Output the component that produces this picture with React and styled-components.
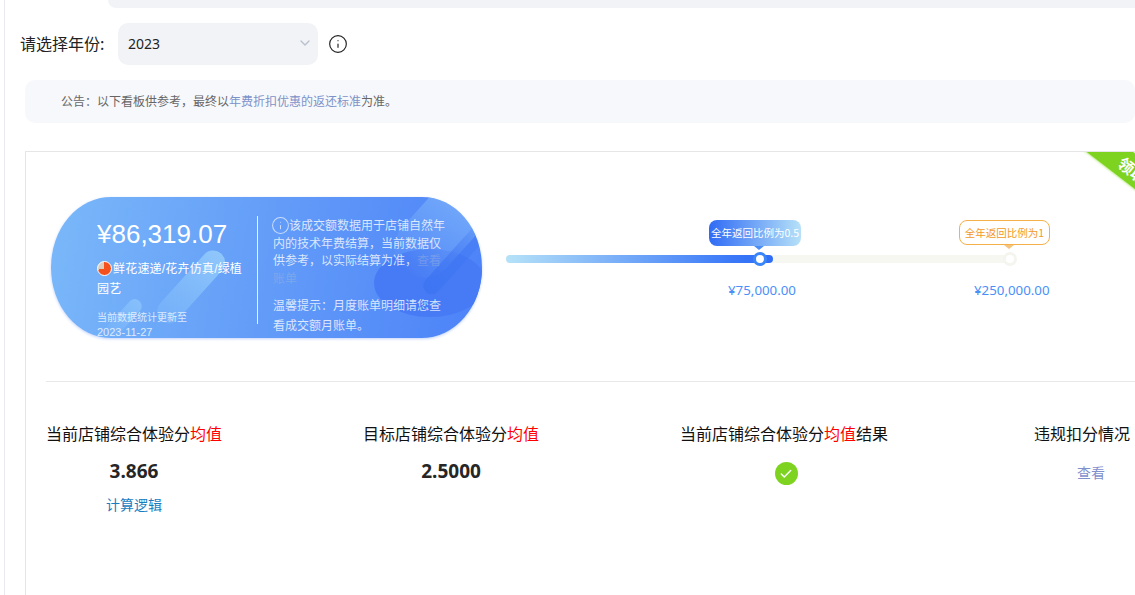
import React from "react";
import styled, { createGlobalStyle } from "styled-components";
import { Info, ChevronDown, Check } from "lucide-react";

const COLON = "\uFF1A";
const COMMA = "\uFF0C";
const STOP = "\u3002";

const GlobalStyle = createGlobalStyle`
  html, body { margin: 0; padding: 0; background: #fff; overflow: hidden; }
  body { font-family: "Noto Sans", "Noto Sans CJK SC", sans-serif; }
`;

const Page = styled.div`
  box-sizing: border-box;
  width: 1131px;
  height: 595px;
  margin-left: 4px;
  border-left: 1px solid #e9e9ef;
  overflow: hidden;
`;
const TopBar = styled.div`
  height: 8px;
  margin-left: 103px;
  background: #f2f3f7;
  border-bottom-left-radius: 10px;
`;
const YearRow = styled.div`
  display: flex;
  align-items: center;
  margin: 15px 0 15px 15px;
`;
const YearLabel = styled.span`
  width: 98px;
  padding-bottom: 3px;
  font-size: 16px;
  color: #222;
  font-family: "Noto Sans CJK SC", sans-serif;
`;
const YearSelect = styled.div`
  box-sizing: border-box;
  display: flex;
  align-items: center;
  justify-content: space-between;
  width: 200px;
  height: 42px;
  padding: 0 5px 2px 10px;
  background: #f2f3f7;
  border-radius: 10px;
  font-size: 14px;
  color: #222;
`;
const YearInfo = styled.span`
  display: flex;
  margin-left: 10px;
  color: #222;
`;
const Notice = styled.div`
  height: 43px;
  margin-left: 20px;
  padding-left: 36px;
  background: #f7f8fb;
  border-radius: 10px;
  font-size: 12px;
  line-height: 42px;
  color: #666;
  font-family: "Noto Sans CJK SC", sans-serif;
`;
const NoticeLink = styled.span`
  color: #7d92c9;
`;
const Card = styled.section`
  position: relative;
  box-sizing: border-box;
  height: 500px;
  margin: 28px 0 0 20px;
  padding: 45px 0 0 20px;
  border: 1px solid #e6e6e6;
  border-right: 0;
  overflow: hidden;
`;
const Ribbon = styled.div`
  position: absolute;
  top: -7px;
  right: -44px;
  box-sizing: border-box;
  width: 120px;
  height: 28px;
  padding-left: 62px;
  background: #7ed321;
  box-shadow: 0 0 3px #7ed321;
  transform: rotate(37.5deg);
  color: #fff;
  font-size: 16px;
  font-weight: 700;
  line-height: 28px;
  white-space: nowrap;
  font-family: "Noto Sans CJK SC", sans-serif;
`;
const TopRow = styled.div`
  display: flex;
  align-items: flex-start;
  margin-left: 5px;
`;
const Hero = styled.div`
  position: relative;
  box-sizing: border-box;
  display: flex;
  flex: none;
  width: 431px;
  height: 141px;
  padding: 19px 0 0 46px;
  border-radius: 60px / 70px;
  background: linear-gradient(100deg, #7ab8f9 0%, #659ff8 45%, #4c82f8 100%);
  box-shadow: 0 1px 3px #c3d2fb;
  overflow: hidden;
  color: #fff;
  font-family: "Liberation Sans", "Noto Sans CJK SC", sans-serif;
`;
const Blob = styled.span`
  position: absolute;
  left: 323px;
  top: 52px;
  width: 112px;
  height: 68px;
  border-radius: 50%;
  background: #467bf5;
`;
const Streak = styled.span`
  position: absolute;
  left: ${(p) => p.$x}px;
  top: ${(p) => p.$y}px;
  width: ${(p) => p.$w}px;
  height: ${(p) => p.$h}px;
  border-radius: ${(p) => p.$w / 2}px;
  background: linear-gradient(180deg, ${(p) => p.$from}, ${(p) => p.$to});
  transform: rotate(42deg);
`;
const HeroLeft = styled.div`
  position: relative;
  flex: none;
  width: 150px;
  margin-right: 10px;
`;
const Amount = styled.div`
  font-size: 26px;
  line-height: 36px;
`;
const Category = styled.div`
  margin-top: 7px;
  font-size: 12px;
  line-height: 20px;
  letter-spacing: 0.2px;
`;
const Pie = styled.span`
  display: inline-block;
  box-sizing: border-box;
  width: 15px;
  height: 15px;
  margin-right: 1px;
  vertical-align: -3px;
  border: 1px solid #fff;
  border-radius: 50%;
  background: conic-gradient(#f4511e 0 72%, #dccdbc 72% 100%);
`;
const Updated = styled.div`
  margin-top: 11px;
  font-size: 10px;
  line-height: 15px;
  opacity: 0.75;
`;
const UpdatedDate = styled.div`
  font-size: 11px;
`;
const VLine = styled.span`
  position: relative;
  flex: none;
  width: 1px;
  height: 108px;
  background: rgba(255, 255, 255, 0.85);
`;
const HeroRight = styled.div`
  position: relative;
  flex: none;
  width: 175px;
  margin-left: 15px;
  font-size: 12px;
  color: rgba(255, 255, 255, 0.78);
`;
const HeroNote = styled.div`
  line-height: 17.5px;
`;
const HeroNoteIcon = styled.span`
  display: inline-flex;
  margin: 0 -1px 0 -2px;
  vertical-align: -5px;
  color: rgba(255, 255, 255, 0.65);
`;
const Faded = styled.span`
  color: rgba(170, 185, 220, 0.4);
`;
const HeroTip = styled.div`
  margin-top: 8px;
  line-height: 20px;
`;
const SliderArea = styled.div`
  position: relative;
  flex: none;
  width: 560px;
  margin: 23px 0 0 24px;
  padding-top: 35px;
`;
const Track = styled.div`
  width: 504px;
  height: 8px;
  border-radius: 4px;
  background: #f7f7f2;
`;
const TrackFill = styled.div`
  height: 8px;
  border-radius: 4px;
  background: linear-gradient(90deg, #b6e2f8 0%, #3a78f8 85%, #2f6df5 100%);
`;
const Thumb = styled.span`
  position: absolute;
  top: 32px;
  left: ${(p) => p.$at - 7}px;
  box-sizing: border-box;
  width: 14px;
  height: 14px;
  border-radius: 50%;
  background: #fff;
  border: 3.5px solid ${(p) => p.$color};
`;
const Bubble = styled.div`
  position: absolute;
  top: 0;
  left: ${(p) => p.$left}px;
  box-sizing: border-box;
  width: ${(p) => p.$w}px;
  height: ${(p) => (p.$filled ? 26 : 25)}px;
  border-radius: 8px;
  font-size: 10.5px;
  text-align: center;
  white-space: nowrap;
  font-family: "Noto Sans CJK SC", sans-serif;
  line-height: ${(p) => (p.$filled ? 25 : 23)}px;
  color: ${(p) => (p.$filled ? "#fff" : "#f39a1e")};
  background: ${(p) => (p.$filled ? "linear-gradient(90deg, #2f6bf5, #b6e1f8)" : "#fff")};
  border: ${(p) => (p.$filled ? "0" : "1px solid #f5b04a")};
`;
const BubbleArrow = styled.span`
  position: absolute;
  left: ${(p) => p.$left}px;
  top: ${(p) => (p.$filled ? 26 : 25)}px;
  width: 0;
  height: 0;
  border-left: 5px solid transparent;
  border-right: 5px solid transparent;
  border-top: 4px solid ${(p) => (p.$filled ? "#4b8cf5" : "#f5c47e")};
`;
const Scale = styled.div`
  display: flex;
  gap: 178px;
  margin-top: 19px;
  padding-left: 222px;
  font-size: 13.3px;
  line-height: 17px;
  color: #4a90f8;
`;
const HDivider = styled.div`
  height: 1px;
  margin-top: 43px;
  background: #e8e8e8;
`;
const Stats = styled.div`
  display: flex;
  gap: 141px;
  margin-top: 39px;
`;
const Stat = styled.div`
  flex: none;
  display: flex;
  flex-direction: column;
  align-items: center;
  &:last-child {
    margin-left: 5px;
  }
`;
const StatTitle = styled.div`
  font-size: 16px;
  line-height: 24px;
  color: #111;
  white-space: nowrap;
  font-family: "Noto Sans CJK SC", sans-serif;
`;
const Red = styled.span`
  color: #ff0000;
`;
const StatValue = styled.div`
  margin-top: 14px;
  font-size: 19px;
  font-weight: 700;
  line-height: 24px;
  color: #262626;
`;
const CalcLink = styled.a`
  margin-top: 11px;
  font-size: 14px;
  line-height: 20px;
  color: #1a7cc0;
  font-family: "Noto Sans CJK SC", sans-serif;
`;
const ViewLink = styled.a`
  margin: 17px 0 0 18px;
  font-size: 14px;
  line-height: 20px;
  color: #7f90cd;
  font-family: "Noto Sans CJK SC", sans-serif;
`;
const CheckBadge = styled.span`
  display: flex;
  align-items: center;
  justify-content: center;
  width: 23px;
  height: 23px;
  margin: 17px 0 0 4px;
  border-radius: 50%;
  background: #7ed321;
  color: #fff;
`;

export default function App() {
  return (
    <>
      <GlobalStyle />
      <Page>
        <TopBar />
        <YearRow>
          <YearLabel>请选择年份:</YearLabel>
          <YearSelect>
            2023
            <ChevronDown size={16} color="#b9bfcc" />
          </YearSelect>
          <YearInfo>
            <Info size={20} strokeWidth={1.4} />
          </YearInfo>
        </YearRow>
        <Notice>
          {`公告${COLON}以下看板供参考${COMMA}最终以`}
          <NoticeLink>年费折扣优惠的返还标准</NoticeLink>
          {`为准${STOP}`}
        </Notice>
        <Card>
          <Ribbon>领取奖励</Ribbon>
          <TopRow>
            <Hero>
              <Streak $x={128} $y={45} $w={24} $h={90} $from="rgba(150,205,252,.85)" $to="rgba(130,190,250,.3)" />
              <Streak $x={66} $y={98} $w={14} $h={46} $from="rgba(150,205,252,.6)" $to="rgba(130,190,250,.15)" />
              <Blob />
              <Streak $x={370} $y={-49} $w={60} $h={140} $from="#86bcfa" $to="rgba(90,140,248,0)" />
              <Streak $x={400} $y={8} $w={17} $h={100} $from="rgba(62,117,242,0)" $to="#3e75f2" />
              <HeroLeft>
                <Amount>¥86,319.07</Amount>
                <Category>
                  <Pie />
                  鲜花速递/花卉仿真/绿植园艺
                </Category>
                <Updated>
                  当前数据统计更新至
                  <UpdatedDate>2023-11-27</UpdatedDate>
                </Updated>
              </HeroLeft>
              <VLine />
              <HeroRight>
                <HeroNote>
                  <HeroNoteIcon>
                    <Info size={19} strokeWidth={1.3} />
                  </HeroNoteIcon>
                  {`该成交额数据用于店铺自然年内的技术年费结算${COMMA}当前数据仅供参考${COMMA}以实际结算为准${COMMA}`}
                  <Faded>查看账单</Faded>
                </HeroNote>
                <HeroTip>{`温馨提示${COLON}月度账单明细请您查看成交额月账单${STOP}`}</HeroTip>
              </HeroRight>
            </Hero>
            <SliderArea>
              <Bubble $filled $left={203} $w={92}>全年返回比例为0.5</Bubble>
              <BubbleArrow $filled $left={248} />
              <Bubble $left={453} $w={91}>全年返回比例为1</Bubble>
              <BubbleArrow $left={498} />
              <Track>
                <TrackFill style={{ width: `${(267 / 504) * 100}%` }} />
              </Track>
              <Thumb $at={254} $color="#3a86f8" />
              <Thumb $at={504} $color="#f5f5ef" />
              <Scale>
                <span>¥75,000.00</span>
                <span>¥250,000.00</span>
              </Scale>
            </SliderArea>
          </TopRow>
          <HDivider />
          <Stats>
            <Stat>
              <StatTitle>当前店铺综合体验分<Red>均值</Red></StatTitle>
              <StatValue>3.866</StatValue>
              <CalcLink>计算逻辑</CalcLink>
            </Stat>
            <Stat>
              <StatTitle>目标店铺综合体验分<Red>均值</Red></StatTitle>
              <StatValue>2.5000</StatValue>
            </Stat>
            <Stat>
              <StatTitle>当前店铺综合体验分<Red>均值</Red>结果</StatTitle>
              <CheckBadge>
                <Check size={14} strokeWidth={2.5} />
              </CheckBadge>
            </Stat>
            <Stat>
              <StatTitle>违规扣分情况</StatTitle>
              <ViewLink>查看</ViewLink>
            </Stat>
          </Stats>
        </Card>
      </Page>
    </>
  );
}
